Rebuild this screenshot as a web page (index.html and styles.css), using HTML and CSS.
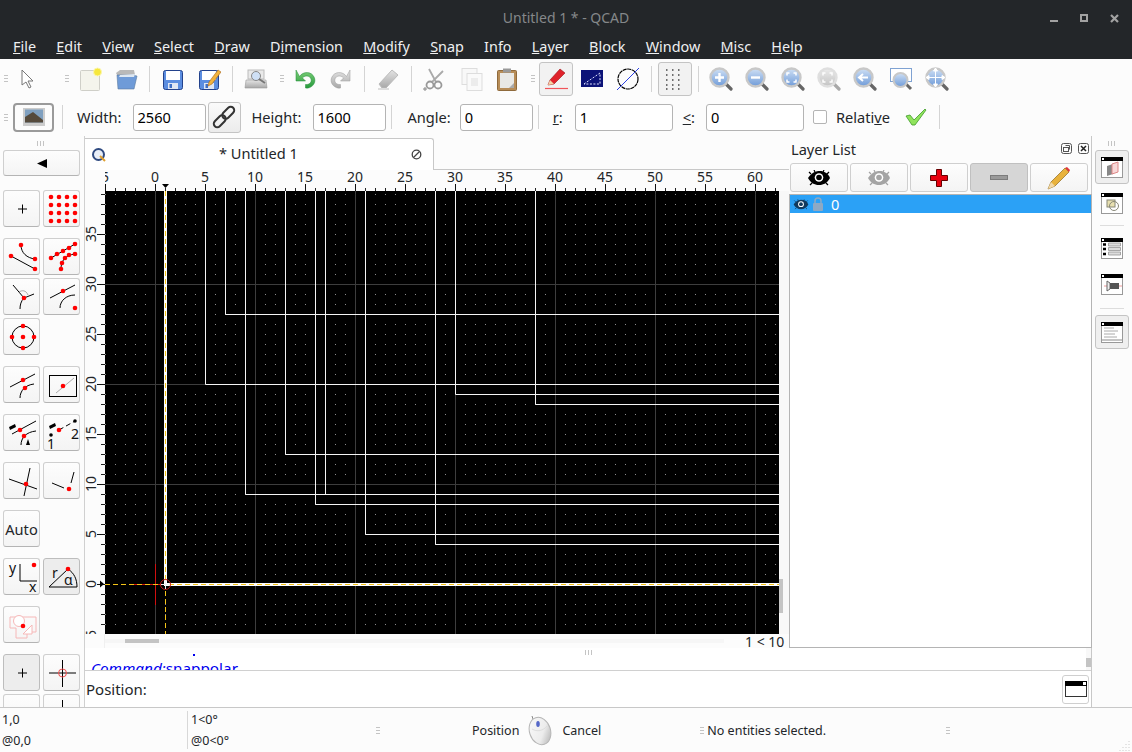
FILE: index.html
```html
<!DOCTYPE html>
<html>
<head>
    <meta charset="UTF-8">
    <title>Untitled 1 * - QCAD</title>
    <link rel="stylesheet" href="styles.css">
</head>
<body>
<svg class="defs" width="0" height="0">
    <defs>
        <linearGradient id="gBlue" x1="0" y1="0" x2="0" y2="1"><stop offset="0" stop-color="#cfe0f5"/><stop offset="1" stop-color="#6f9bd8"/></linearGradient>
        <linearGradient id="gGrey" x1="0" y1="0" x2="0" y2="1"><stop offset="0" stop-color="#e4e4e4"/><stop offset="1" stop-color="#a8a8a8"/></linearGradient>
        <linearGradient id="gGreen" x1="0" y1="0" x2="0" y2="1"><stop offset="0" stop-color="#7fd07a"/><stop offset="1" stop-color="#269a3c"/></linearGradient>
        <linearGradient id="gMouse" x1="0" y1="0" x2="1" y2="1"><stop offset="0" stop-color="#fafafa"/><stop offset=".6" stop-color="#ececec"/><stop offset="1" stop-color="#a8a8a8"/></linearGradient>
        <pattern id="dots" patternUnits="userSpaceOnUse" x="105" y="194" width="10" height="10"><rect width="1" height="1" fill="#8c8c8c"/></pattern>
        <pattern id="tickX" patternUnits="userSpaceOnUse" x="105" y="0" width="10" height="21"><rect y="18" width="1" height="3" fill="#222"/></pattern>
        <pattern id="tickX5" patternUnits="userSpaceOnUse" x="105" y="0" width="50" height="21"><rect y="14" width="1" height="7" fill="#111"/></pattern>
        <pattern id="tickY" patternUnits="userSpaceOnUse" x="0" y="194" width="20" height="10"><rect x="16" width="4" height="1" fill="#222"/></pattern>
        <pattern id="tickY5" patternUnits="userSpaceOnUse" x="0" y="234" width="20" height="50"><rect x="12" width="8" height="1" fill="#111"/></pattern>

        <symbol id="i-zoom" viewBox="0 0 24 24">
            <path d="M16 16l6 6" stroke="#666" stroke-width="3.2" stroke-linecap="round"/>
            <circle cx="10.5" cy="10.5" r="9" fill="url(#gBlue)" stroke="#c8c8c8" stroke-width="2.4"/>
        </symbol>
        <symbol id="i-floppy" viewBox="0 0 24 24">
            <rect x="2.5" y="3.5" width="19" height="19" rx="2" fill="#5b8de0" stroke="#23428c"/>
            <rect x="5" y="4" width="14" height="9" fill="#fff"/>
            <rect x="7" y="16" width="10" height="6" fill="#dfe6f3"/>
            <rect x="8.5" y="17" width="2.5" height="4" fill="#3f6fc6"/>
        </symbol>
        <symbol id="i-win" viewBox="0 0 24 24">
            <rect x="1.5" y="2.5" width="21" height="20" fill="#fff" stroke="#999"/>
            <rect x="1" y="2" width="22" height="4" fill="#000"/>
            <rect x="2" y="3" width="2" height="2" fill="#fff"/>
        </symbol>
        <symbol id="i-eye" viewBox="0 0 24 16">
            <path d="M1 8C5 2 9 1 13 1s8 2 10 7c-3 5-6 7-11 7S4 13 1 8z"/>
            <path d="M4 4L2 2M8 2L7 0M16 2l1-2M20 4l2-2M5 13l-2 2M19 13l2 2" stroke="currentColor" stroke-width="1.200"/>
            <circle cx="12" cy="7.5" r="4.300" fill="#fff"/>
            <circle cx="12" cy="7.5" r="2.800"/>
        </symbol>
    </defs>
</svg>

<div class="window">
    <div class="titlebar">
        <span class="title">Untitled 1 * - QCAD</span>
        <svg class="winbtns" width="72" height="12" viewBox="0 0 72 12">
            <rect x="0" y="8" width="8" height="2" fill="#a2a2a2"/>
            <rect x="31" y="3" width="6" height="6" fill="none" stroke="#a2a2a2" stroke-width="2"/>
            <path d="M61 3l7 7M68 3l-7 7" stroke="#a2a2a2" stroke-width="2.2"/>
        </svg>
    </div>

    <div class="menubar">
        <span><u>F</u>ile</span><span><u>E</u>dit</span><span><u>V</u>iew</span><span><u>S</u>elect</span><span><u>D</u>raw</span><span>D<u>i</u>mension</span><span><u>M</u>odify</span><span><u>S</u>nap</span><span>Info</span><span><u>L</u>ayer</span><span><u>B</u>lock</span><span><u>W</u>indow</span><span><u>M</u>isc</span><span><u>H</u>elp</span>
    </div>

    <div class="toolbar">
        <i class="grip first"></i>
        <div class="tool arrow"><svg viewBox="0 0 24 24"><path d="M6 3v15l4-3 3 6 2-1-3-6h5z" fill="#fff" stroke="#777"/></svg></div>
        <i class="grip far"></i>
        <div class="tool"><svg viewBox="0 0 24 24"><rect x="2.5" y="3.5" width="19" height="20" rx="1" fill="#f4f4ec" stroke="#cfcfc8"/><circle cx="19.5" cy="5" r="4" fill="#f6e73c" stroke="#fbf6b0"/></svg></div>
        <div class="tool"><svg viewBox="0 0 24 24"><path d="M2 6l4-3h14l1 5H3z" fill="#b9b9b9"/><path d="M3 8h15l5 1-3 13H4z" fill="#6f9bd8" stroke="#5a7a9e" stroke-width=".6"/><path d="M6 8l15-1-1 3H5z" fill="#dde7f2"/></svg></div>
        <i class="sep"></i>
        <div class="tool"><svg><use href="#i-floppy"/></svg></div>
        <div class="tool"><svg viewBox="0 0 24 24"><use href="#i-floppy"/><path d="M11 19l1-4L21 3l3 2-9 12z" fill="#f2b33d" stroke="#a8651a" stroke-width=".6"/></svg></div>
        <i class="sep"></i>
        <div class="tool"><svg viewBox="0 0 24 24"><rect x="4" y="3" width="16" height="9" fill="#e9e9e9" stroke="#bbb"/><path d="M2 13h20l1 8H1z" fill="url(#gGrey)" stroke="#999" stroke-width=".6"/><circle cx="12" cy="9" r="4.5" fill="#cfe0f5" stroke="#888"/><path d="M15 12l6 4" stroke="#777" stroke-width="2"/></svg></div>
        <i class="grip mid"></i>
        <div class="tool"><svg viewBox="0 0 24 24"><path d="M6.5 9.5C10 4 19 4 21.5 11c2 6-4 11-9 10v-3.500c4 .5 6.500-2.500 5.500-5.500-1-3.500-6-4-8.500-1l3 3H3V3z" fill="url(#gGreen)" stroke="#1f8a36" stroke-width=".5"/></svg></div>
        <div class="tool"><svg viewBox="0 0 24 24"><path d="M17.500 9.500C14 4 5 4 2.500 11c-2 6 4 11 9 10v-3.500c-4 .5-6.500-2.500-5.500-5.500 1-3.500 6-4 8.500-1l-3 3H21V3z" fill="url(#gGrey)" stroke="#999" stroke-width=".5"/></svg></div>
        <i class="sep"></i>
        <div class="tool"><svg viewBox="0 0 24 24"><path d="M3 17L16 3l6 5-12 13H6z" fill="url(#gGrey)" stroke="#bbb"/><path d="M2 22h11" stroke="#ddd" stroke-width="2"/></svg></div>
        <i class="sep"></i>
        <div class="tool"><svg viewBox="0 0 24 24"><path d="M6 2l7 13M20 4L9 15" stroke="#aaa" stroke-width="1.800"/><circle cx="7" cy="18" r="3.500" fill="none" stroke="#999" stroke-width="1.800"/><circle cx="15" cy="18" r="3.500" fill="none" stroke="#999" stroke-width="1.800"/><path d="M0 22h4M2 20v4" stroke="#888"/></svg></div>
        <div class="tool"><svg viewBox="0 0 24 24"><rect x="3" y="1.500" width="15" height="16" fill="#f8f8f8" stroke="#ddd"/><rect x="8" y="6.500" width="15" height="17" fill="#fafafa" stroke="#ddd"/><rect x="12" y="11" width="7" height="8" fill="#ececec"/></svg></div>
        <div class="tool"><svg viewBox="0 0 24 24"><rect x="2.500" y="3.500" width="19" height="20" rx="1" fill="#b78d58" stroke="#8f6a3c"/><rect x="5" y="6" width="14" height="15" fill="#e9e9e6"/><rect x="8" y="1.500" width="8" height="4" fill="#999"/><path d="M14 21l5-5v5z" fill="#aaa"/></svg></div>
        <i class="grip mid"></i>
        <div class="tool on"><svg viewBox="0 0 24 24"><path d="M4 18l2-5L16 2l5 4-11 11z" fill="#e0232b" stroke="#9c1016" stroke-width=".6"/><path d="M4 18l2-5 4 4z" fill="#f3d5a8"/><path d="M1 21.500h23" stroke="#f0555a" stroke-width="1.200"/></svg></div>
        <div class="tool"><svg viewBox="0 0 24 24"><rect x="1" y="3" width="22" height="17" fill="#0c1378"/><path d="M4 17L20 6v11z" fill="none" stroke="#dfe3ff" stroke-dasharray="2 1.500"/></svg></div>
        <div class="tool"><svg viewBox="0 0 24 24"><circle cx="12" cy="12" r="10" fill="none" stroke="#000" stroke-width="1.200" stroke-dasharray="4 .6"/><path d="M1 23L23 1" stroke="#2a3fe0"/></svg></div>
        <i class="sep"></i>
        <div class="tool on"><svg viewBox="0 0 24 24"><path d="M3 3h18M3 8h18M3 13h18M3 18h18M3 22h18" fill="none" stroke="#444" stroke-width="1.500" stroke-dasharray="1.500 4.500"/></svg></div>
        <i class="sep tight"></i>
        <div class="tool"><svg viewBox="0 0 24 24"><use href="#i-zoom"/><path d="M10.500 6v9M6 10.500h9" stroke="#fff" stroke-width="2.400"/></svg></div>
        <div class="tool"><svg viewBox="0 0 24 24"><use href="#i-zoom"/><path d="M6 10.500h9" stroke="#fff" stroke-width="2.400"/></svg></div>
        <div class="tool"><svg viewBox="0 0 24 24"><use href="#i-zoom"/><path d="M6 8.500V6h2.500M12.500 6H15v2.500M15 12.500V15h-2.500M8.500 15H6v-2.500" fill="none" stroke="#fff" stroke-width="1.500"/></svg></div>
        <div class="tool dim"><svg viewBox="0 0 24 24"><use href="#i-zoom"/><path d="M6 8.500V6h2.500M12.500 6H15v2.500M15 12.500V15h-2.500M8.500 15H6v-2.500" fill="none" stroke="#fff" stroke-width="1.500"/></svg></div>
        <div class="tool"><svg viewBox="0 0 24 24"><use href="#i-zoom"/><path d="M15 10.500H7M10 7l-4 3.500L10 14" fill="none" stroke="#fff" stroke-width="2"/></svg></div>
        <div class="tool"><svg viewBox="0 0 24 24"><rect x="1.500" y="1.500" width="21" height="13" fill="#fff" stroke="#7fa2d2"/><path d="M16 16l6 6" stroke="#666" stroke-width="3"/><circle cx="11.500" cy="13" r="7" fill="url(#gBlue)" stroke="#c8c8c8" stroke-width="2"/></svg></div>
        <div class="tool"><svg viewBox="0 0 24 24"><use href="#i-zoom"/><path d="M10.500 1v19M1 10.500h19M10.500 1l-2 3h4zM10.500 20l-2-3h4zM1 10.500l3-2v4zM20 10.500l-3-2v4z" fill="#fff" stroke="#fff"/></svg></div>
    </div>

    <div class="optionbar">
        <i class="grip first"></i>
        <div class="imgbtn"><svg width="22" height="18" viewBox="0 0 22 18"><rect width="22" height="18" fill="#ccc"/><rect x="2" y="1.500" width="18" height="13" fill="#7fa0c0"/><path d="M2 9l8-5 10 8v2.500H2z" fill="#554a3c"/></svg></div>
        <i class="sep first-sep"></i>
        <label>Width:</label><input class="field" value="2560">
        <div class="linkbtn"><svg width="24" height="24" viewBox="0 0 24 24"><g transform="rotate(-45 12 12)" fill="none" stroke="#333" stroke-width="2"><rect x="-1" y="8.500" width="14" height="7" rx="3.500"/><rect x="11" y="8.500" width="14" height="7" rx="3.500"/></g></svg></div>
        <label class="after-btn">Height:</label><input class="field" value="1600">
        <i class="sep"></i>
        <label class="angle">Angle:</label><input class="field" value="0">
        <i class="sep"></i>
        <label class="rad"><u>r</u>:</label><input class="field wide" value="1">
        <label class="le"><u>&lt;</u>:</label><input class="field wide" value="0">
        <span class="checkbox"></span>
        <span class="checktext">Relati<u>v</u>e</span>
        <svg class="apply" width="22" height="18" viewBox="0 0 22 18"><path d="M1 8l4-1 4 5L20 1l1 1L10 17H7z" fill="#90e35c" stroke="#3f9a2a" stroke-width=".8"/></svg>
        <i class="sep last"></i>
    </div>

    <div class="main">
        <div class="cadbar">
            <div class="topgrip"></div>
            <div class="cadbtn back"><svg width="10" height="9" viewBox="0 0 10 9"><path d="M0 4.500L10 0v9z"/></svg></div>

            <div class="cadgroup top">
                <div class="cadbtn"><svg viewBox="0 0 36 36"><path class="ln" d="M14 18h9M18.500 13.500v9"/></svg></div>
                <div class="cadbtn"><svg viewBox="0 0 36 36"><g class="rd"><circle cx="7" cy="6" r="2.300"/><circle cx="15" cy="6" r="2.300"/><circle cx="23" cy="6" r="2.300"/><circle cx="31" cy="6" r="2.300"/><circle cx="7" cy="14" r="2.300"/><circle cx="15" cy="14" r="2.300"/><circle cx="23" cy="14" r="2.300"/><circle cx="31" cy="14" r="2.300"/><circle cx="7" cy="22" r="2.300"/><circle cx="15" cy="22" r="2.300"/><circle cx="23" cy="22" r="2.300"/><circle cx="31" cy="22" r="2.300"/><circle cx="7" cy="30" r="2.300"/><circle cx="15" cy="30" r="2.300"/><circle cx="23" cy="30" r="2.300"/><circle cx="31" cy="30" r="2.300"/></g></svg></div>
            </div>

            <div class="cadgroup">
                <div class="cadbtn"><svg viewBox="0 0 36 36"><path class="ln" d="M7 17l24 13M17 6c0 8 6 13 14 14"/><g class="rd"><circle cx="7" cy="17" r="2.300"/><circle cx="31" cy="30" r="2.300"/><circle cx="17" cy="6" r="2.300"/><circle cx="31" cy="20" r="2.300"/></g></svg></div>
                <div class="cadbtn"><svg viewBox="0 0 36 36"><path class="ln" d="M7 19L31 5M17 30c0-8 4-14 14-15"/><g class="rd"><circle cx="7" cy="19" r="2.300"/><circle cx="13" cy="15" r="2.300"/><circle cx="19" cy="12" r="2.300"/><circle cx="25" cy="9" r="2.300"/><circle cx="31" cy="5" r="2.300"/><circle cx="17" cy="30" r="2.300"/><circle cx="18" cy="24" r="2.300"/><circle cx="21" cy="19" r="2.300"/><circle cx="25" cy="16" r="2.300"/><circle cx="31" cy="15" r="2.300"/></g></svg></div>
                <div class="cadbtn"><svg viewBox="0 0 36 36"><path class="ln" d="M9 6l11 13M30 15l-10 4M16 30c0-4 1-8 4-11"/><path d="M15 13c3-2 7-2 9 3" fill="none" stroke="#aaa"/><g class="rd"><circle cx="20" cy="19" r="2.300"/></g></svg></div>
                <div class="cadbtn"><svg viewBox="0 0 36 36"><path class="ln" d="M6 19L31 6M16 29c0-7 6-13 15-13"/><g class="rd"><circle cx="19" cy="12" r="2.300"/><circle cx="31" cy="29" r="2.300"/></g></svg></div>
                <div class="cadbtn"><svg viewBox="0 0 36 36"><circle class="ln" cx="19" cy="18" r="11"/><g class="rd"><circle cx="19" cy="18" r="2.300"/><circle cx="19" cy="7" r="2.300"/><circle cx="19" cy="29" r="2.300"/><circle cx="8" cy="18" r="2.300"/><circle cx="30" cy="18" r="2.300"/></g></svg></div>
            </div>

            <div class="cadgroup">
                <div class="cadbtn"><svg viewBox="0 0 36 36"><path class="ln" d="M6 20L31 7M16 31c0-7 5-13 14-14"/><g class="rd"><circle cx="19" cy="13" r="2.300"/><circle cx="21" cy="21" r="2.300"/></g></svg></div>
                <div class="cadbtn"><svg viewBox="0 0 36 36"><rect class="ln" x="5.500" y="8.500" width="27" height="21"/><path d="M12 26L30 11" stroke="#aaa" fill="none"/><g class="rd"><circle cx="19" cy="19" r="2.300"/></g></svg></div>
            </div>

            <div class="cadgroup">
                <div class="cadbtn"><svg viewBox="0 0 36 36"><path class="ln" d="M8 19L32 6M17 30c0-7 5-13 15-14"/><path d="M5 12l6-3 1 3-6 3zM22 30l2-6 2 6z"/><g class="rd"><circle cx="16" cy="15" r="2.300"/><circle cx="20" cy="21" r="2.300"/></g></svg></div>
                <div class="cadbtn"><svg viewBox="0 0 36 36"><path class="ln" d="M15 15L31 6" stroke-dasharray="5 3"/><path d="M5 11l6-3 1 3-6 3z"/><circle cx="7" cy="20" r="1.800"/><circle cx="31" cy="6" r="1.800"/><text class="cadnum" x="3" y="34">1</text><text class="cadnum" x="27" y="24">2</text><g class="rd"><circle cx="15" cy="15" r="2.300"/></g></svg></div>
            </div>

            <div class="cadgroup">
                <div class="cadbtn"><svg viewBox="0 0 36 36"><path class="ln" d="M5 16l28 10M26 5l-6 28"/><g class="rd"><circle cx="22" cy="21" r="2.300"/></g></svg></div>
                <div class="cadbtn"><svg viewBox="0 0 36 36"><path class="ln" d="M8 20l12 5M30 9l-3 11"/><g class="rd"><circle cx="25" cy="26" r="2.300"/></g></svg></div>
            </div>

            <div class="cadgroup">
                <div class="cadbtn wordbtn">Auto</div>
            </div>

            <div class="cadgroup">
                <div class="cadbtn"><svg viewBox="0 0 36 36"><path class="ln" d="M16 5v17h17"/><text class="cadnum" x="5" y="14">y</text><text class="cadnum" x="25" y="33">x</text><g class="rd"><circle cx="30" cy="6" r="2.300"/></g></svg></div>
                <div class="cadbtn on"><svg viewBox="0 0 36 36"><path class="ln" d="M5 28L24 10c6 4 9 10 9 18z"/><text class="cadnum" x="8" y="19">r</text><text class="cadnum" x="20" y="26">α</text><g class="rd"><circle cx="24" cy="10" r="2.300"/></g></svg></div>
            </div>

            <div class="cadgroup">
                <div class="cadbtn"><svg viewBox="0 0 36 36"><path d="M6 10h26v15H23v6H12V21H6z" fill="none" stroke="#f6b8b8"/><circle cx="15" cy="14" r="5.500" fill="#fff" stroke="#f6b8b8"/><path d="M19 27l9-9v9z" fill="#fff" stroke="#f6b8b8"/><g class="rd"><circle cx="19" cy="19" r="2.300"/></g></svg></div>
            </div>

            <div class="cadgroup">
                <div class="cadbtn on"><svg viewBox="0 0 36 36"><path class="ln" d="M14 18h9M18.500 13.500v9"/></svg></div>
                <div class="cadbtn"><svg viewBox="0 0 36 36"><path class="ln" d="M5 18h27M18.500 5v27"/><circle cx="18.500" cy="18" r="4" fill="none" stroke="#f05050"/></svg></div>
                <div class="cadbtn"></div>
                <div class="cadbtn"><svg viewBox="0 0 36 36"><path class="ln" d="M18.500 5v27"/></svg></div>
            </div>
        </div>

        <div class="center">
            <div class="upper">
                <div class="mdi">
                    <div class="tabrow">
                        <div class="tab">
                            <svg width="14" height="14" viewBox="0 0 14 14"><circle cx="6.500" cy="6.500" r="5.500" fill="#e8eef8" stroke="#2f4a80" stroke-width="2"/><path d="M8 8l5 5" stroke="#e0a030" stroke-width="2"/></svg>
                            <span class="tabtitle">* Untitled 1</span>
                            <svg width="11" height="11" viewBox="0 0 11 11"><circle cx="5.500" cy="5.500" r="4.300" fill="none" stroke="#444" stroke-width="1.300"/><path d="M2.500 8.500l6-6" stroke="#444" stroke-width="1.300"/></svg>
                        </div>
                    </div>
                    <div class="view">
                        <div class="corner"></div>
                        <svg class="ruler-top" width="684" height="21" viewBox="105 0 684 21">
                            <rect x="105" y="0" width="674" height="21" fill="url(#tickX)"/>
                            <rect x="105" y="0" width="674" height="21" fill="url(#tickX5)"/>
                            <path d="M162 14h7l-3.500 4z"/>
                            <g class="ruler-label" text-anchor="middle">
                                <text x="105" y="12">5</text><text x="155" y="12">0</text><text x="205" y="12">5</text><text x="255" y="12">10</text><text x="305" y="12">15</text><text x="355" y="12">20</text><text x="405" y="12">25</text><text x="455" y="12">30</text><text x="505" y="12">35</text><text x="555" y="12">40</text><text x="605" y="12">45</text><text x="655" y="12">50</text><text x="705" y="12">55</text><text x="755" y="12">60</text>
                            </g>
                        </svg>
                        <svg class="ruler-left" width="20" height="443" viewBox="0 191 20 443">
                            <rect x="0" y="191" width="20" height="443" fill="url(#tickY)"/>
                            <rect x="0" y="191" width="20" height="443" fill="url(#tickY5)"/>
                            <path d="M15 580.500v7l4-3.500z"/>
                            <g class="ruler-label" text-anchor="middle">
                                <text transform="translate(11 234) rotate(-90)">35</text><text transform="translate(11 284) rotate(-90)">30</text><text transform="translate(11 334) rotate(-90)">25</text><text transform="translate(11 384) rotate(-90)">20</text><text transform="translate(11 434) rotate(-90)">15</text><text transform="translate(11 484) rotate(-90)">10</text><text transform="translate(11 534) rotate(-90)">5</text><text transform="translate(11 584) rotate(-90)">0</text><text transform="translate(11 634) rotate(-90)">5</text>
                            </g>
                        </svg>
                        <svg class="canvas" width="674" height="443" viewBox="105 191 674 443">
                            <rect x="105" y="191" width="674" height="443" fill="#000"/>
                            <rect x="105" y="191" width="674" height="443" fill="url(#dots)"/>
                            <path class="metagrid" d="M155.500 191v443M255.500 191v443M355.500 191v443M455.500 191v443M555.500 191v443M655.500 191v443M755.500 191v443M105 284.500h674M105 384.500h674M105 484.500h674"/>
                            <path class="entity" d="M205.500 191v193.500H779M225.500 191v123.500H779M245.500 191v303.500H779M285.500 191v263.500H779M315.500 191v313.500H779M325.500 191v303.500M365.500 191v343.500H779M435.500 191v353.500H779M455.500 191v203.500H779M535.500 191v213.500H779"/>
                            <path class="entity-thick" d="M165.500 191v393.500H779"/>
                            <path class="red" d="M155.500 564v41M130 584.500h35"/>
                            <path class="dash" d="M165.500 191v443M105 584.500h674"/>
                            <circle class="redc" cx="165.500" cy="584.500" r="5"/>
                            <path d="M161 584.500h9M165.500 580v9" stroke="#eee"/>
                        </svg>
                        <div class="vscroll"><div class="vthumb"></div></div>
                    </div>
                    <div class="viewfoot">
                        <div class="footcorner"></div>
                        <div class="hscroll"><div class="hthumb"></div></div>
                        <span class="grid-info">1 &lt; 10</span>
                    </div>
                </div>

                <div class="dock">
                    <div class="dockhead">
                        <span>Layer List</span>
                        <svg class="dockicons" width="28" height="12" viewBox="0 0 28 12"><rect x=".5" y=".5" width="10" height="10" rx="2" fill="none" stroke="#555"/><rect x="2.500" y="4.500" width="5" height="4" fill="none" stroke="#555"/><path d="M4.500 2.500h4v4" fill="none" stroke="#555"/><rect x="17.500" y=".5" width="10" height="10" rx="2" fill="none" stroke="#555"/><path d="M20 3l5 5M25 3l-5 5" stroke="#222" stroke-width="1.500"/></svg>
                    </div>
                    <div class="docktools">
                        <div class="dockbtn"><svg width="24" height="16"><use href="#i-eye"/></svg></div>
                        <div class="dockbtn grey"><svg width="24" height="16"><use href="#i-eye"/></svg></div>
                        <div class="dockbtn"><svg width="18" height="18" viewBox="0 0 18 18"><path d="M6.500.5h5v6h6v5h-6v6h-5v-6h-6v-5h6z" fill="#e8000f" stroke="#600"/></svg></div>
                        <div class="dockbtn on"><svg width="18" height="6" viewBox="0 0 18 6"><rect x=".5" y=".5" width="17" height="4" fill="#9a9a9a" stroke="#7c7c7c"/></svg></div>
                        <div class="dockbtn"><svg width="24" height="24" viewBox="0 0 24 24"><path d="M1 23l3-7L18 2l4 4L8 20z" fill="#e8b23c" stroke="#8f6a20" stroke-width=".7"/><path d="M18 2l2-1 3 3-1 2z" fill="#e0353a"/><path d="M1 23l3-7 4 4z" fill="#f2d9a8"/></svg></div>
                    </div>
                    <div class="layerlist">
                        <div class="layerrow">
                            <svg class="roweye" width="16" height="11" viewBox="0 0 24 16"><use href="#i-eye" width="24" height="16"/></svg>
                            <svg class="rowlock" width="10" height="14" viewBox="0 0 10 14"><path d="M2 7V4a3 3 0 0 1 6 0v3" fill="none" stroke="#8da9c4" stroke-width="1.500"/><rect y="6" width="10" height="8" rx="1" fill="#8da9c4"/></svg>
                            <span>0</span>
                        </div>
                    </div>
                </div>
            </div>

            <div class="history">
                <i class="vgrip"></i>
                <i class="histdot"></i>
                <div class="histline"><em>Command:</em>snappolar</div>
                <div class="histscroll"><div class="histthumb"></div></div>
            </div>
            <div class="cmdrow">
                <span>Position:</span>
                <div class="cmdbtn"><svg width="22" height="16" viewBox="0 0 22 16"><rect x=".5" y=".5" width="21" height="15" fill="#fff" stroke="#333"/><rect width="22" height="5"/><rect x="18" y="1" width="3" height="3" fill="#fff"/></svg></div>
            </div>
        </div>

        <div class="sidebar">
            <div class="topgrip"></div>
            <div class="sidebtn on"><svg width="24" height="24"><use href="#i-win"/><path d="M7 11l6-2v10l-6 2z" fill="#888"/><path d="M12 9l6-2v10l-6 2z" fill="#f8d8d8" stroke="#d88"/></svg></div>
            <div class="sidebtn"><svg width="24" height="24"><use href="#i-win"/><rect x="7" y="9" width="8" height="7" fill="#e8e0b0" stroke="#887"/><circle cx="14" cy="15" r="4.500" fill="none" stroke="#887"/></svg></div>
            <i class="sidesep"></i>
            <div class="sidebtn"><svg width="24" height="24"><use href="#i-win"/><path d="M3 8.500h3M3 13h3M3 18h3" stroke="#000" stroke-width="2.500"/><path d="M8.500 7h12v3h-12zM8.500 11.500h12v3h-12zM8.500 16h12v3h-12z" fill="#ddd" stroke="#888" stroke-width=".7"/></svg></div>
            <div class="sidebtn"><svg width="24" height="24"><use href="#i-win"/><path d="M4 14h18" stroke="#e99"/><path d="M7 9v10l3-2v-6z" fill="#eee" stroke="#666"/><rect x="10" y="11" width="9" height="6" fill="#555"/></svg></div>
            <i class="sidesep second"></i>
            <div class="sidebtn on"><svg width="24" height="24"><use href="#i-win"/><path d="M4 8h10M4 11h14M4 14h11M4 17h13" stroke="#aaa"/><path d="M2 20h20" stroke="#888"/></svg></div>
        </div>
    </div>

    <div class="statusbar">
        <div class="coords abs">
            <span>1,0</span>
            <span>@0,0</span>
        </div>
        <div class="coords pol">
            <span>1&lt;0°</span>
            <span>@0&lt;0°</span>
        </div>
        <i class="grip statgrip"></i>
        <span class="mouse-left">Position</span>
        <svg class="mouse" width="26" height="31" viewBox="0 0 26 31"><path d="M6 4L5 1" stroke="#888"/><ellipse cx="13" cy="16" rx="10.500" ry="14" transform="rotate(-18 13 16)" fill="url(#gMouse)" stroke="#b5b5b5"/><path d="M5 14c5 3 11 2 15-3" fill="none" stroke="#ddd"/><ellipse cx="11" cy="9" rx="1.800" ry="3" fill="#5568c8"/></svg>
        <span class="mouse-right">Cancel</span>
        <i class="grip statgrip sel"></i>
        <span class="selinfo">No entities selected.</span>
        <i class="grip statgrip end"></i>
        <svg class="sizegrip" width="12" height="12" viewBox="0 0 12 12"><path d="M10 1v1M7 4v1M10 4v1M4 7v1M7 7v1M10 7v1M1 10v1M4 10v1M7 10v1M10 10v1" stroke="#ccc"/></svg>
    </div>
</div>
</body>
</html>
```

FILE: styles.css
```css
* { box-sizing: border-box; }
html, body { margin: 0; padding: 0; }
body {
    width: 1132px; height: 752px;
    overflow: hidden;
    font-family: "Noto Sans", sans-serif;
    font-size: 14.6px;
    color: #232629;
    background: #fcfcfc;
}
i { font-style: normal; display: block; flex: none; }
svg { display: block; flex: none; }
.defs { position: absolute; }

.window { display: flex; flex-direction: column; height: 752px; }

/* title + menu */
.titlebar {
    height: 35px;
    background: #232629;
    display: flex;
    align-items: center;
    justify-content: center;
    position: relative;
}
.title { color: #85888a; font-size: 14px; }
.winbtns { position: absolute; left: 1050px; top: 12px; }
.menubar {
    height: 24px;
    background: #232629;
    color: #eff0f1;
    display: flex;
    gap: 20.25px;
    padding-left: 13px;
    line-height: 24px;
    font-size: 14.4px;
}

/* toolbars */
.toolbar, .optionbar { display: flex; align-items: center; flex: none; }
.toolbar { height: 39px; }
.optionbar { height: 38px; }
.grip {
    width: 4px; height: 7px;
    background: repeating-linear-gradient(#c4c4c4 0 1px, transparent 1px 3px);
}
.grip.first { margin-left: 4px; }
.grip.far { margin-left: 19px; margin-right: 3px; }
.grip.mid { margin-left: 6px; margin-right: 3px; }
.tool {
    width: 36px; height: 36px;
    flex: none;
    display: flex; align-items: center; justify-content: center;
}
.tool svg { width: 24px; height: 24px; }
.tool.arrow { margin-left: 2px; }
.tool.dim { opacity: .55; filter: grayscale(1); }
.tool.on {
    width: 34px; height: 34px;
    margin: 0 1px;
    border: 1px solid #c4c4c4;
    border-radius: 3px;
    background: #f2f2f2;
}
.sep { width: 1px; height: 26px; background: #d4d4d4; margin: 0 5px; }
.sep.tight { margin-right: 4px; }

.imgbtn {
    width: 41px; height: 29px;
    margin-left: 5px;
    border: 2px solid #9a9a9a;
    border-radius: 4px;
    display: flex; align-items: center; justify-content: center;
}
.optionbar .sep { height: 24px; margin: 0 14px 0 5px; }
.optionbar .sep.first-sep { margin-left: 8px; }
.optionbar .sep.last { margin-left: 12px; }
.optionbar label { margin-right: 11px; }
.optionbar label.after-btn { margin-left: 11px; }
.optionbar label.angle { margin-left: 2px; margin-right: 9px; }
.optionbar label.rad { margin-right: 12px; }
.optionbar label.le { margin-left: 10px; }
.field {
    width: 73px; height: 27px;
    flex: none;
    border: 1px solid #b4b4b4;
    border-radius: 3px;
    background: #fff;
    padding: 0 4px;
    font: 14.6px "Noto Sans", sans-serif;
    color: #000;
}
.field.wide { width: 98px; }
.linkbtn {
    width: 33px; height: 31px;
    margin-left: 2px;
    border: 1px solid #c4c4c4;
    border-radius: 3px;
    background: linear-gradient(#fafafa, #ececec);
    display: flex; align-items: center; justify-content: center;
}
.checkbox {
    width: 14px; height: 14px;
    margin-left: 9px;
    border: 1px solid #b4b4b4;
    border-radius: 2px;
    background: #fff;
    flex: none;
}
.checktext { margin-left: 9px; }
.apply { margin-left: 15px; }

/* main area */
.main { display: flex; height: 571px; flex: none; }
.cadbar {
    width: 85px; flex: none;
    overflow: hidden;
    border-right: 1px solid #d0d0d0;
    padding-left: 3px;
}
.topgrip {
    width: 8px; height: 5px;
    margin: 5px auto 0;
    background: repeating-linear-gradient(90deg, #c4c4c4 0 1px, transparent 1px 3px);
}
.cadbar .topgrip { margin-left: 34px; }
.cadgroup {
    display: grid;
    grid-template-columns: 37px 37px;
    column-gap: 3px;
    row-gap: 3px;
    margin-top: 11px;
}
.cadgroup.top { margin-top: 14px; }
.cadbtn {
    height: 37px;
    border: 1px solid #cfcfcf;
    border-bottom-color: #b4b4b4;
    border-radius: 3px;
    background: linear-gradient(#fdfdfd, #f4f4f4);
}
.cadbtn svg { width: 36px; height: 36px; }
.cadbtn.on { background: #ededed; border-color: #bdbdbd; }
.cadbtn.back {
    width: 77px; height: 26px;
    margin-top: 4px;
    display: flex; align-items: center; justify-content: center;
}
.cadbtn.back svg { width: 10px; height: 9px; }
.wordbtn { display: flex; align-items: center; justify-content: center; }
.ln { fill: none; stroke: #000; stroke-width: 1; }
.rd { fill: #f00; }
.cadnum { font-size: 14px; fill: #111; }

.center { width: 1007px; flex: none; display: flex; flex-direction: column; border-right: 1px solid #c8c8c8; }
.upper { display: flex; height: 512px; flex: none; }
.mdi { width: 704px; flex: none; }
.tabrow { height: 34px; border-bottom: 1px solid #c8c8c8; padding-top: 2px; }
.tab {
    width: 349px; height: 32px;
    background: #fff;
    border: 1px solid #c8c8c8;
    border-bottom: none;
    border-left: none;
    border-radius: 0 3px 0 0;
    display: flex; align-items: center;
    padding: 0 11px 0 7px;
    margin-bottom: -1px;
}
.tabtitle { flex: 1; text-align: center; line-height: 26px; height: 30px; }
.view {
    display: grid;
    grid-template-columns: 20px 674px 10px;
    grid-template-rows: 21px 443px;
}
.ruler-top { grid-column: 2 / 4; }
.ruler-left { grid-column: 1; }
.ruler-label { font-size: 14px; fill: #232629; }
.canvas { grid-column: 2; }
.metagrid { stroke: #3d3d3d; fill: none; }
.entity { stroke: #f4f4f4; fill: none; }
.entity-thick { stroke: #fff; stroke-width: 3; fill: none; }
.dash { stroke: #f5c518; stroke-dasharray: 5 3; fill: none; }
.red { stroke: #d01010; fill: none; }
.redc { stroke: #c01818; fill: none; }
.vscroll { background: #f8f8f8; }
.vthumb { width: 4px; height: 34px; margin-top: 388px; background: #c4c4c4; }
.viewfoot { display: flex; height: 14px; }
.footcorner { width: 20px; height: 14px; border-right: 1px solid #f0f0f0; }
.hscroll { width: 619px; height: 4px; margin-top: 5px; background: #f6f6f6; }
.hthumb { width: 34px; height: 4px; margin-left: 20px; background: #c4c4c4; }
.grid-info { margin-left: 21px; line-height: 14px; padding-top: 1px; white-space: nowrap; font-size: 14px; }

.dock { width: 303px; flex: none; display: flex; flex-direction: column; }
.dockhead {
    height: 27px;
    display: flex; align-items: center; justify-content: space-between;
    padding: 0 3px 2px 2px;
}
.docktools { display: flex; gap: 2px; padding-left: 1px; height: 31px; }
.dockbtn {
    width: 58px; height: 29px;
    border: 1px solid #cfcfcf;
    border-radius: 3px;
    background: linear-gradient(#fdfdfd, #f4f4f4);
    display: flex; align-items: center; justify-content: center;
    color: #000;
}
.dockbtn.grey { color: #a4a4a4; }
.dockbtn.grey svg { fill: #a4a4a4; }
.dockbtn.on { background: #d6d6d6; border-color: #c0c0c0; }
.layerlist { flex: 1; border: 1px solid #b4b4b4; background: #fff; width: 303px; }
.layerrow {
    height: 18px;
    background: #2ba1f6;
    display: flex; align-items: center;
    padding-left: 3px;
    color: #fff;
}
.roweye { fill: #113a5e; color: #113a5e; }
.rowlock { margin-left: 4px; }
.layerrow span { margin-left: 8px; }

.history { height: 23px; position: relative; overflow: hidden; display: flex; background: #fff; border-bottom: 1px solid #d0d0d0; }
.vgrip {
    position: absolute; left: 500px; top: 2px;
    width: 8px; height: 5px;
    background: repeating-linear-gradient(90deg, #c4c4c4 0 1px, transparent 1px 3px);
}
.histdot { position: absolute; left: 108px; top: 6px; width: 2px; height: 2px; background: #0000ee; }
.histline {
    position: absolute; left: 6px; top: 10px;
    color: #0000ee;
    white-space: nowrap;
    font-size: 15.3px;
}
.histscroll { position: absolute; right: 0; top: 0; width: 5px; height: 23px; background: #f8f8f8; }
.histthumb { width: 5px; height: 9px; margin-top: 10px; background: #c4c4c4; }
.cmdrow {
    height: 36px;
    display: flex; align-items: center; justify-content: space-between;
    padding: 0 2px 0 1px;
    background: #fff;
    font-size: 15px;
}
.cmdbtn {
    width: 27px; height: 29px;
    border: 1px solid #cfcfcf;
    border-radius: 3px;
    display: flex; align-items: center; justify-content: center;
}

.sidebar { width: 40px; flex: none; display: flex; flex-direction: column; align-items: center; }
.sidebar .topgrip { margin-bottom: 4px; }
.sidebtn {
    width: 34px; height: 34px;
    flex: none;
    display: flex; align-items: center; justify-content: center;
    margin-bottom: 2px;
}
.sidebtn.on { background: #efefef; border: 1px solid #c4c4c4; border-radius: 3px; }
.sidesep { width: 24px; height: 1px; background: #ddd; margin: 3px 0 5px; }
.sidesep.second { margin: 5px 0 6px; }

/* status */
.statusbar {
    height: 45px; flex: none;
    border-top: 1px solid #c8c8c8;
    display: flex; align-items: center;
    font-size: 12.5px;
}
.coords { display: flex; flex-direction: column; gap: 4px; line-height: 17px; flex: none; }
.coords.abs { width: 187px; padding-left: 2px; }
.coords.pol { width: 189px; padding-left: 3px; border-left: 1px solid #d8d8d8; }
.mouse-left { margin-left: 92px; }
.mouse { margin: 0 9px 0 8px; }
.statgrip.sel { margin-left: 99px; }
.selinfo { margin-left: 3px; }
.statgrip.end { margin-left: 120px; }
.sizegrip { margin-left: auto; margin-right: 1px; align-self: flex-end; }
```
